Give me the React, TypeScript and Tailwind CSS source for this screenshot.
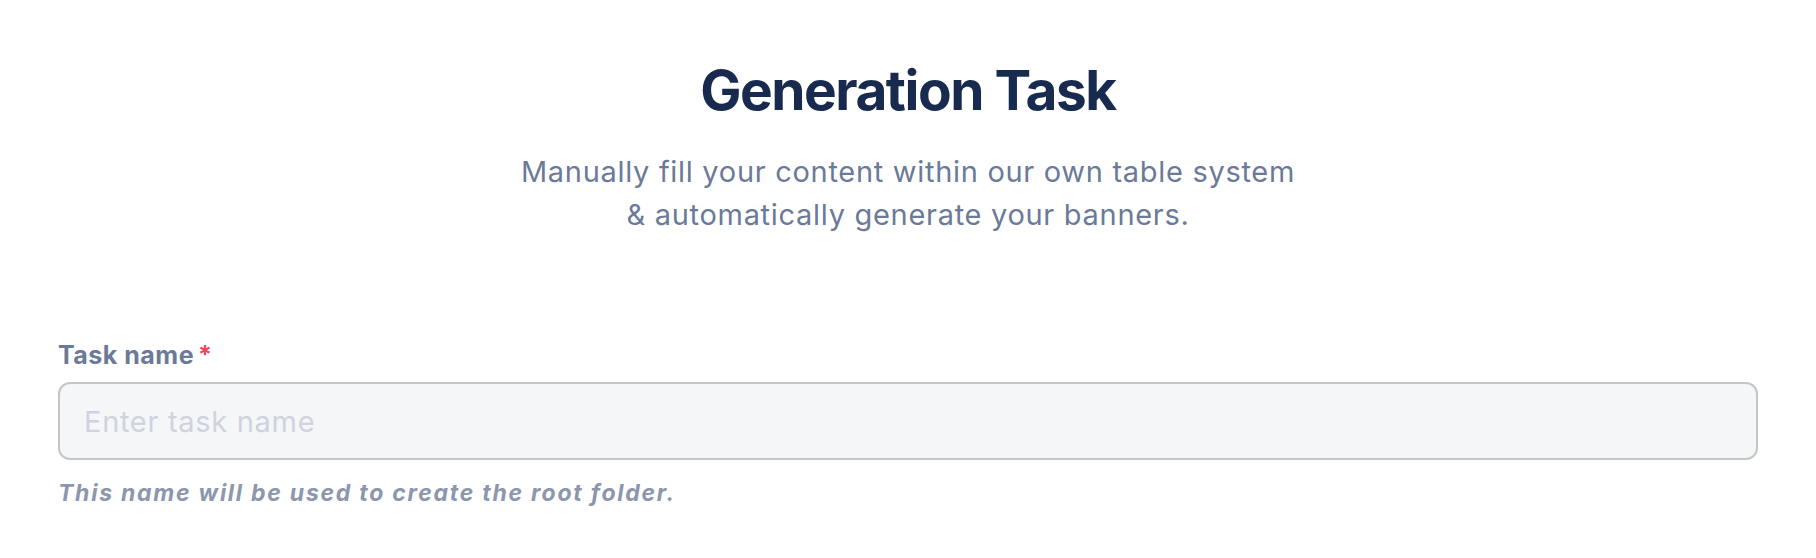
export default function App() {
  return (
    <div className="w-[1816px] h-[558px] bg-white px-[58px] pt-[57px]" style={{ fontFamily: "Inter, 'Noto Sans', sans-serif" }}>
      <h1 className="text-center text-[55px] leading-[66px] font-bold text-[#182a4e] tracking-[-1.5px]">Generation Task</h1>
      <p className="mt-[27px] text-center text-[29px] leading-[43px] text-[#6b7a99] tracking-[0.7px]">
        Manually fill your content within our own table system
        <br />& automatically generate your banners.
      </p>
      <div className="mt-[104px]">
        <label className="flex items-start text-[25px] leading-[30px] font-bold text-[#6b7a99] tracking-[0.5px]">
          Task name<span className="ml-[4px] text-[#f0435f]">*</span>
        </label>
        <input
          type="text"
          placeholder="Enter task name"
          className="mt-[12px] block w-full h-[78px] rounded-[12px] border-2 border-[#c4c5c9] bg-[#f5f6f8] px-[24px] text-[29px] tracking-[0.7px] text-[#182a4e] placeholder:text-[#cfd3df] outline-none"
        />
        <p className="mt-[19px] text-[23px] leading-[28px] font-bold italic text-[#8c96ad] tracking-[1.75px]">
          This name will be used to create the root folder.
        </p>
      </div>
    </div>
  );
}
